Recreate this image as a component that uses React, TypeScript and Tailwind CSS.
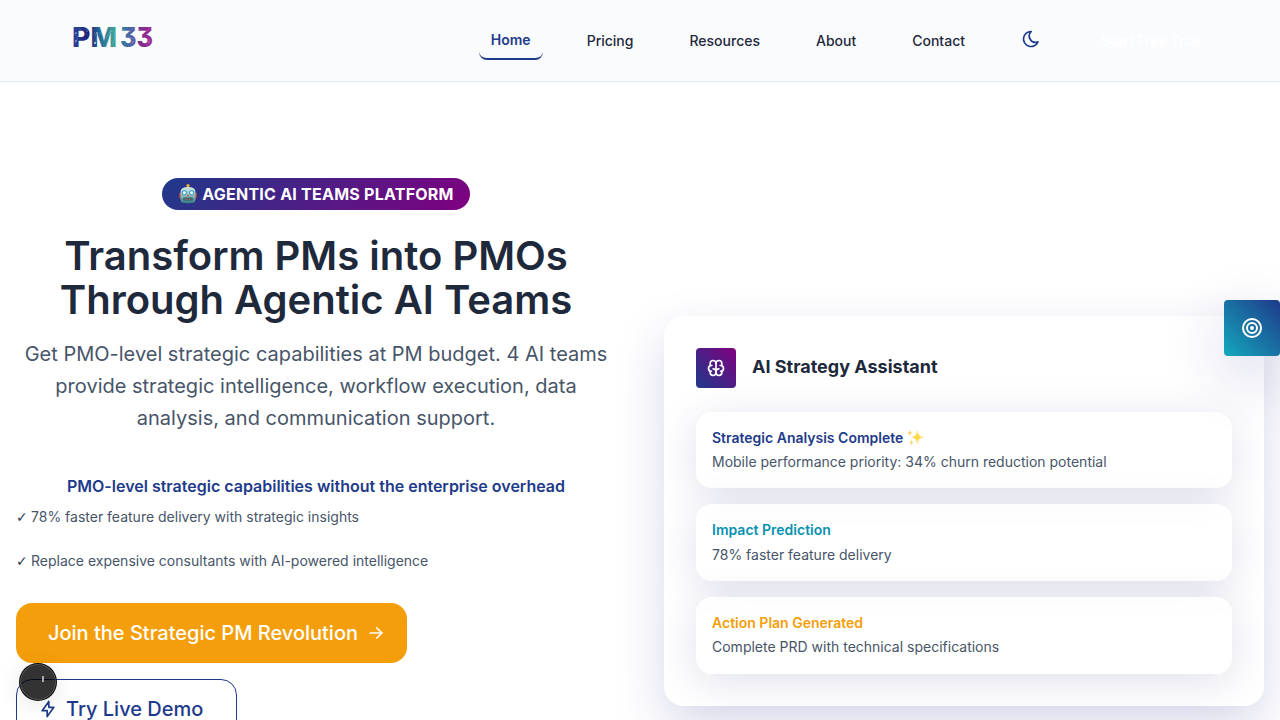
import { TbArrowRight, TbBolt, TbBrain, TbMoon, TbTarget } from "react-icons/tb";

const links = ["Pricing", "Resources", "About", "Contact"];

const cards = [
  { title: "Strategic Analysis Complete", sparkle: true, body: "Mobile performance priority: 34% churn reduction potential", color: "text-[#1e3a8a]", box: "h-[76px]", gap: "mt-0.5" },
  { title: "Impact Prediction", sparkle: false, body: "78% faster feature delivery", color: "text-[#0891b2]", box: "h-[77px]", gap: "mt-[3px]" },
  { title: "Action Plan Generated", sparkle: false, body: "Complete PRD with technical specifications", color: "text-[#f59e0b]", box: "h-[77px]", gap: "mt-0.5" },
];

function Logo() {
  return (
    <svg width="82" height="34" viewBox="0 -5 82 34" className="block overflow-visible">
      <defs>
        <linearGradient id="pm" x1="0" x2="44" y1="0" y2="0" gradientUnits="userSpaceOnUse">
          <stop offset="0" stopColor="#26459b" />
          <stop offset="0.36" stopColor="#1d1f72" />
          <stop offset="0.6" stopColor="#24699a" />
          <stop offset="1" stopColor="#43ab94" />
        </linearGradient>
        <linearGradient id="num" x1="48" x2="80" y1="0" y2="0" gradientUnits="userSpaceOnUse">
          <stop offset="0" stopColor="#2a80a0" />
          <stop offset="0.42" stopColor="#5b55a4" />
          <stop offset="0.6" stopColor="#7f2b8b" />
          <stop offset="1" stopColor="#a02a98" />
        </linearGradient>
      </defs>
      <g fontFamily="Inter, sans-serif" fontWeight="800" fontSize="27.5" style={{ fontFeatureSettings: '"cv09"' }}>
        <text x="-1" y="21.5" textLength="45" lengthAdjust="spacingAndGlyphs" fill="url(#pm)">PM</text>
        <text x="47" y="21.5" textLength="33" lengthAdjust="spacingAndGlyphs" fill="url(#num)">33</text>
      </g>
      <g stroke="#fff" strokeWidth="0.45" fill="none" opacity="0.35">
        <path d="M1 8l4 4-3 6M5 3l5 3 5-3M13 8l4 5M21 7l3 6-2 5M27 7l5 7 5-7M40 5l2 7-3 8M50 4l6 3 5-4M55 12l6 2-3 6M66 4l7 3 4-4M71 12l6 3-3 5" />
      </g>
      <g fill="#fff" opacity="0.8">
        <circle cx="3" cy="8" r="0.7" /><circle cx="3" cy="16" r="0.7" /><circle cx="14" cy="6" r="0.6" />
        <circle cx="22" cy="18" r="0.9" /><circle cx="24" cy="8" r="0.7" /><circle cx="38" cy="6" r="0.6" />
        <circle cx="60" cy="17" r="0.5" /><circle cx="76" cy="17" r="0.5" />
      </g>
    </svg>
  );
}

function Robot() {
  return (
    <svg width="20" height="20" viewBox="0 0 20 20" className="mr-1 shrink-0">
      <defs>
        <linearGradient id="bot" x1="0" y1="0" x2="0" y2="1">
          <stop offset="0" stopColor="#d3e4e4" />
          <stop offset="0.5" stopColor="#9cbfc3" />
          <stop offset="1" stopColor="#327c84" />
        </linearGradient>
      </defs>
      <rect x="1" y="8.5" width="18" height="6" rx="1.5" fill="#a9443f" />
      <rect x="9" y="1.5" width="2" height="3" fill="#5b8690" />
      <circle cx="10" cy="1.6" r="1.6" fill="#f2b22e" />
      <path d="M2.5 8q0-5 7.5-5t7.5 5v7.5l-1 3q-6.5 1.5-13 0l-1-3z" fill="url(#bot)" />
      <circle cx="6.3" cy="8.8" r="2.6" fill="#35a7c5" />
      <circle cx="13.7" cy="8.8" r="2.6" fill="#35a7c5" />
      <circle cx="6.3" cy="8.8" r="1.5" fill="#effcff" />
      <circle cx="13.7" cy="8.8" r="1.5" fill="#effcff" />
      <path d="M10 10l1.3 2.2H8.7z" fill="#e0564b" />
      <rect x="5.2" y="13.5" width="9.6" height="3" rx="1" fill="#245e68" />
      <path d="M6.5 15h7" stroke="#dc7464" strokeWidth="1.2" strokeDasharray="1.5 .6" />
    </svg>
  );
}

function Sparkles() {
  return (
    <svg width="17" height="17" viewBox="0 0 17 17" className="ml-1 inline-block align-[-3px]">
      <path d="M10.3 1.8Q10.9 7.5 16.2 8.2 10.9 8.9 10.3 14.8 9.7 8.9 4.5 8.2 9.7 7.5 10.3 1.8Z" fill="#ffdc4f" stroke="#ffe487" strokeWidth=".6" />
      <path d="M2.8 1Q3.1 3.6 5.2 4 3.1 4.4 2.8 7 2.5 4.4.4 4 2.5 3.6 2.8 1ZM4.4 11Q4.7 13.2 6.7 13.6 4.7 14 4.4 16.2 4.1 14 2.2 13.6 4.1 13.2 4.4 11Z" fill="#ffd36b" />
    </svg>
  );
}

function Check() {
  return <span className="mr-1 inline-block w-[11px] font-['DejaVu_Sans',sans-serif] leading-none font-bold text-[#334155]">✓</span>;
}

export default function App() {
  return (
    <div className="relative h-[720px] w-[1280px] overflow-hidden bg-white font-['Inter',sans-serif] text-[#1e293b]">
      <header className="flex h-[82px] items-center justify-between border-b border-[#e2e8f0] bg-[#fafbfd] pr-20 pl-[73px]">
        <div className="-mt-2"><Logo /></div>
        <nav className="flex items-center text-sm font-medium">
          <a className="mr-8 flex h-[38px] w-16 items-center justify-center rounded-lg border-b-2 border-[#1e3a8a] font-semibold text-[#1e3a8a]">Home</a>
          {links.map((l) => (
            <a key={l} className="mr-8 px-3">{l}</a>
          ))}
          <TbMoon className="mt-[-4px] mr-[60px] ml-[12px] size-5 text-[#1e3a8a]" />
          <a className="w-[99px] font-semibold whitespace-nowrap text-white">Start Free Trial</a>
        </nav>
      </header>

      <main className="flex">
        <section className="w-[632px] px-4 pt-24">
          <div className="flex justify-center">
            <span className="flex h-8 w-[308px] items-center justify-center rounded-full bg-[linear-gradient(135deg,#1e3a8a,#800080)] text-base font-bold tracking-[0.24px] whitespace-nowrap text-white"><Robot />AGENTIC AI TEAMS PLATFORM</span>
          </div>
          <h1 className="mt-6 text-center text-[40px] leading-[44px] font-semibold whitespace-nowrap">Transform PMs into PMOs<br />Through Agentic AI Teams</h1>
          <p className="mt-4 text-center text-xl leading-8 whitespace-nowrap text-[#475569]">Get PMO-level strategic capabilities at PM budget. 4 AI teams<br />provide strategic intelligence, workflow execution, data<br />analysis, and communication support.</p>
          <p className="mt-10 text-center text-base leading-6 font-semibold text-[#1e3a8a]">PMO-level strategic capabilities without the enterprise overhead</p>
          <p className="mt-2 h-[22px] text-sm leading-[22px] text-[#475569]"><Check />78% faster feature delivery with strategic insights</p>
          <p className="mt-[22px] h-[22px] text-sm leading-[22px] text-[#475569]"><Check />Replace expensive consultants with AI-powered intelligence</p>
          <button className="mt-[31px] flex h-[60px] w-[391px] items-center rounded-2xl bg-[#f59e0b] pl-8 text-xl font-medium whitespace-nowrap text-white">
            Join the Strategic PM Revolution<TbArrowRight className="ml-2 size-5" />
          </button>
          <button className="mt-4 flex h-[60px] w-[221px] items-center rounded-2xl border border-[#1e3a8a] pl-[21px] text-xl font-medium whitespace-nowrap text-[#1e3a8a]">
            <TbBolt className="mr-2 size-5" />Try Live Demo
          </button>
        </section>

        <section className="ml-8 w-[600px] pt-[234px]">
          <div className="h-[390px] rounded-[20px] bg-white p-8 shadow-[0_20px_50px_rgba(40,45,140,0.18)]">
            <div className="flex items-center gap-4">
              <div className="flex size-10 items-center justify-center rounded bg-[linear-gradient(45deg,#1e3a8a,#800080)] text-white"><TbBrain size={20} /></div>
              <h2 className="-mt-0.5 text-lg leading-7 font-bold">AI Strategy Assistant</h2>
            </div>
            <div className="mt-6 flex flex-col gap-4">
              {cards.map((c) => (
                <div key={c.title} className={`${c.box} rounded-2xl bg-white/80 px-4 pt-[15px] shadow-[0_8px_40px_rgba(45,45,130,0.15)]`}>
                  <h3 className={`h-[22px] text-sm leading-[22px] font-semibold ${c.color}`}>{c.title}{c.sparkle && <Sparkles />}</h3>
                  <p className={`${c.gap} text-sm leading-[22px] text-[#475569]`}>{c.body}</p>
                </div>
              ))}
            </div>
          </div>
        </section>
      </main>

      <div className="absolute top-[300px] right-0 flex size-14 items-center justify-center rounded bg-[linear-gradient(45deg,#14a8bd,#1e3a8a)] text-white shadow-[0_20px_60px_rgba(40,40,140,0.2)]">
        <TbTarget size={24} />
      </div>
      <div className="absolute top-[663px] left-[19px] size-[38px] rounded-full border border-black/80 bg-black/80 shadow-[0_4px_24px_rgba(0,0,0,0.1),inset_0_0_0_1px_#555]">
        <span className="absolute top-3 left-[22px] h-1.5 w-0.5 bg-[#aaa]" />
      </div>
    </div>
  );
}
